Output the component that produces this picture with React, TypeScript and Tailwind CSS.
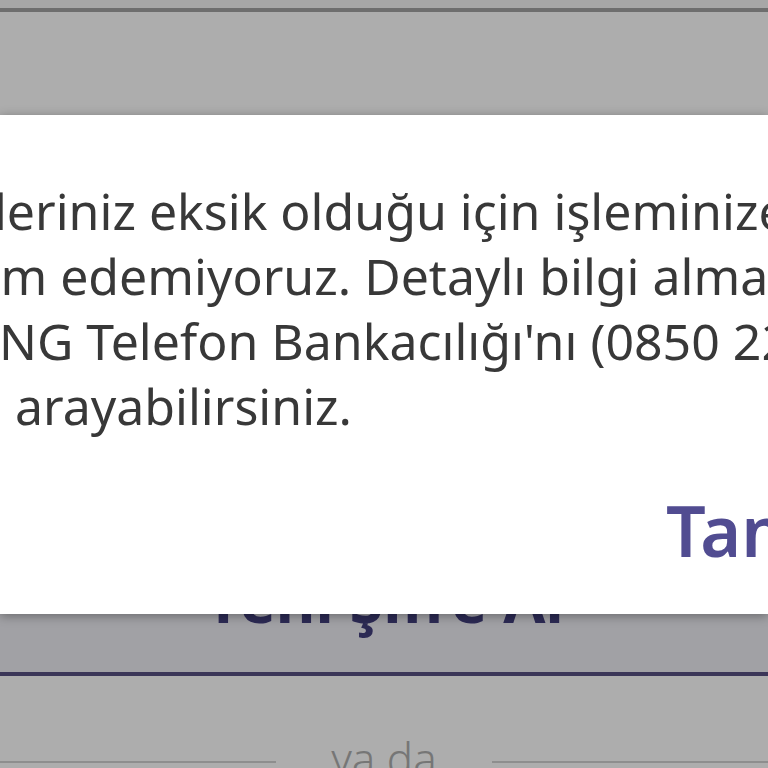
export default function App() {
  return (
    <div
      className="relative h-[768px] w-full overflow-hidden bg-white"
      style={{ fontFamily: '"Noto Sans", "DejaVu Sans", sans-serif' }}
    >
      {/* page behind the dialog */}
      <div className="flex flex-col">
        <div className="h-[8px] bg-[#f7f7f7]" />
        <div className="h-[4px] bg-[#a2a2a2]" />
        <div className="h-[524px]" />
        <div className="flex flex-col items-center border-b-4 border-[#585082] bg-[#eeedf4] pt-[34px] pb-[42px]">
          <span className="whitespace-nowrap text-[61px] leading-[60px] font-bold text-[#423e7d]">
            Yeni Şifre Al
          </span>
        </div>
        <div className="mt-[60px] flex items-center gap-[55px]">
          <div className="mt-[8px] h-[2px] flex-1 bg-[#d1d1d1]" />
          <span className="text-[44px] leading-[44px] font-light text-[#afafaf]">ya da</span>
          <div className="mt-[8px] h-[2px] flex-1 bg-[#d1d1d1]" />
        </div>
      </div>

      {/* dim overlay */}
      <div className="absolute inset-0 bg-black/[0.32]" />

      {/* dialog */}
      <div className="absolute left-0 right-0 top-[115px] h-[499px] bg-white pt-[64px] shadow-[0_2px_10px_rgba(0,0,0,0.35)]">
        <div className="text-[50px] leading-[65px] text-[#383838]">
          <div className="ml-[-108px] whitespace-nowrap">Bilgileriniz eksik olduğu için işleminize</div>
          <div className="ml-[-111px] whitespace-nowrap">devam edemiyoruz. Detaylı bilgi almak için</div>
          <div className="ml-[-18px] whitespace-nowrap">ING Telefon Bankacılığı'nı (0850 222 0 600)</div>
          <div className="ml-[15px] whitespace-nowrap">arayabilirsiniz.</div>
        </div>
        <div className="mt-[56px] ml-[666px] whitespace-nowrap text-[70px] leading-[70px] font-semibold text-[#514c91]">
          Tamam
        </div>
      </div>
    </div>
  );
}
